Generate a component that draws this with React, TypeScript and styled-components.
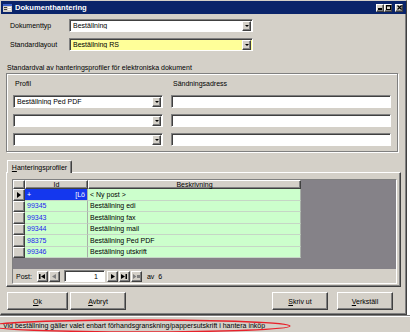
import React from 'react';
import styled, { createGlobalStyle, css } from 'styled-components';

const FONT = `'Liberation Sans', Arial, sans-serif`;

const GlobalStyle = createGlobalStyle`
  html, body {
    margin: 0;
    padding: 0;
    background: #ffffff;
  }
  body {
    font-family: ${FONT};
    font-size: 7px;
    color: #000;
  }
`;

const raised = css`
  border: 1px solid;
  border-color: #ffffff #404040 #404040 #ffffff;
  box-shadow: inset -1px -1px #808080;
  background: #d4d0c8;
  box-sizing: border-box;
`;

const sunken = css`
  border: 1px solid;
  border-color: #808080 #ffffff #ffffff #808080;
  box-shadow: inset 1px 1px #404040;
  box-sizing: border-box;
`;

const Page = styled.div`
  width: 410px;
  height: 332px;
  display: flex;
  flex-direction: column;
  overflow: hidden;
  background: #ffffff;
`;

const Window = styled.div`
  width: 407px;
  height: 315px;
  box-sizing: border-box;
  background: #d4d0c8;
  border: 1px solid;
  border-color: #d4d0c8 #404040 #404040 #d4d0c8;
  box-shadow: inset -1px -1px #808080;
  display: flex;
  flex-direction: column;
`;

const TitleBar = styled.div`
  height: 13px;
  background: #0a246a;
  display: flex;
  align-items: center;
  padding: 0 3px 0 2px;
`;

const Title = styled.span`
  color: #ffffff;
  font-weight: bold;
  font-size: 7.6px;
  margin-left: 3px;
`;

const Controls = styled.div`
  margin-left: auto;
  display: flex;
`;

const CtrlButton = styled.div<{ $gap?: boolean }>`
  ${raised};
  width: 8px;
  height: 8px;
  margin-left: ${p => (p.$gap ? '3px' : '0')};
  display: flex;
  align-items: center;
  justify-content: center;
`;

const Body = styled.div`
  padding: 5px 0 0 5px;
  display: flex;
  flex-direction: column;
`;

const FormRow = styled.div`
  display: flex;
  align-items: center;
  height: 13px;
  padding-left: 4px;
  margin-bottom: 6px;
`;

const Label = styled.div`
  width: 59px;
`;

const ComboBox = styled.div<{ $width: number; $yellow?: boolean }>`
  ${sunken};
  width: ${p => p.$width}px;
  height: 13px;
  background: ${p => (p.$yellow ? '#ffff99' : '#ffffff')};
  display: flex;
  align-items: center;
  padding: 0 1px 0 3px;
`;

const ComboText = styled.span`
  flex: 1;
  white-space: nowrap;
  overflow: hidden;
`;

const DropButton = styled.div`
  ${raised};
  width: 9px;
  height: 10px;
  display: flex;
  align-items: center;
  justify-content: center;
  &::after {
    content: '';
    border-left: 2px solid transparent;
    border-right: 2px solid transparent;
    border-top: 2px solid #000;
  }
`;

const Caption = styled.div`
  margin-top: 5px;
  padding-left: 1px;
  height: 11px;
  line-height: 11px;
`;

const GroupBox = styled.div`
  width: 392px;
  height: 79px;
  box-sizing: border-box;
  border: 1px solid #808080;
  box-shadow: inset 1px 1px #ffffff, 1px 1px #ffffff;
  padding: 5px 6px 0 6px;
  display: grid;
  grid-template-columns: 150px 220px;
  column-gap: 8px;
  row-gap: 6px;
  align-content: start;
`;

const GroupLabel = styled.div`
  height: 10px;
  line-height: 10px;
  padding-left: 2px;
`;

const TextField = styled.div`
  ${sunken};
  height: 13px;
  background: #ffffff;
`;

const TabStrip = styled.div`
  margin-top: 8px;
  display: flex;
  height: 13px;
  position: relative;
  z-index: 1;
  margin-bottom: -1px;
`;

const Tab = styled.div`
  margin-left: 1px;
  width: 65px;
  height: 13px;
  box-sizing: border-box;
  background: #d4d0c8;
  border-top: 1px solid #ffffff;
  border-left: 1px solid #ffffff;
  border-right: 1px solid #404040;
  border-top-right-radius: 2px;
  box-shadow: inset -1px 0 #808080;
  display: flex;
  align-items: center;
  justify-content: center;
`;

const Underline = styled.span`
  text-decoration: underline;
`;

const Panel = styled.div`
  width: 395px;
  height: 115px;
  box-sizing: border-box;
  border: 1px solid;
  border-color: #ffffff #404040 #404040 #ffffff;
  box-shadow: inset -1px -1px #808080;
  padding: 6px 0 0 5px;
`;

const Grid = styled.div`
  width: 385px;
  height: 105px;
  box-sizing: border-box;
  border: 1px solid;
  border-color: #808080 #ffffff #ffffff #808080;
  background: #858288;
  display: flex;
  flex-direction: column;
`;

const GridRows = styled.div`
  flex: 1;
  display: flex;
  flex-direction: column;
`;

const Row = styled.div<{ $header?: boolean }>`
  display: flex;
  height: ${p => (p.$header ? '9px' : '11.5px')};
`;

const Selector = styled.div`
  ${raised};
  width: 12px;
  flex-shrink: 0;
  display: flex;
  align-items: center;
  justify-content: center;
`;

const Pointer = styled.span`
  border-top: 3px solid transparent;
  border-bottom: 3px solid transparent;
  border-left: 4px solid #000;
`;

const HeaderCell = styled.div<{ $width: number }>`
  ${raised};
  width: ${p => p.$width}px;
  flex-shrink: 0;
  display: flex;
  align-items: center;
  justify-content: center;
  line-height: 1;
`;

const Cell = styled.div<{ $width: number; $blue?: boolean; $selected?: boolean }>`
  width: ${p => p.$width}px;
  flex-shrink: 0;
  box-sizing: border-box;
  background: ${p => (p.$selected ? '#1437ee' : '#ccffcc')};
  color: ${p => (p.$selected ? '#ffffff' : p.$blue ? '#1c1cf0' : '#000')};
  border-right: 1px solid #a8b0a8;
  border-bottom: 1px solid #c6d6c6;
  padding: 0 2px;
  display: flex;
  align-items: center;
  white-space: nowrap;
`;

const Placeholder = styled.span`
  margin-left: auto;
`;

const NavBar = styled.div`
  height: 14px;
  background: #d4d0c8;
  display: flex;
  align-items: center;
  padding-left: 3px;
`;

const NavButton = styled.div<{ $disabled?: boolean; $ml?: number }>`
  ${raised};
  width: 11px;
  height: 11px;
  margin-left: ${p => p.$ml ?? 1}px;
  display: flex;
  align-items: center;
  justify-content: center;
  color: ${p => (p.$disabled ? '#808080' : '#000')};
`;

const NavInput = styled.div`
  ${sunken};
  width: 41px;
  height: 12px;
  margin-left: 4px;
  background: #ffffff;
  display: flex;
  align-items: center;
  justify-content: flex-end;
  padding-right: 6px;
`;

const NavText = styled.span<{ $ml?: number }>`
  margin-left: ${p => p.$ml ?? 0}px;
`;

const ButtonRow = styled.div`
  margin-top: 5px;
  width: 395px;
  display: flex;
  padding-left: 1px;
  box-sizing: border-box;
`;

const PushButton = styled.div<{ $width: number; $ml?: number }>`
  ${raised};
  width: ${p => p.$width}px;
  height: 18px;
  margin-left: ${p => p.$ml ?? 0}px;
  display: flex;
  align-items: center;
  justify-content: center;
`;

const StatusBar = styled.div`
  position: relative;
  flex: 1;
  background: #d4d0c8;
  border-top: 1px solid #808080;
  box-shadow: inset 0 1px #ffffff;
  display: flex;
  align-items: center;
  padding: 2px 0 0 3px;
  white-space: nowrap;
`;

const Marker = styled.svg`
  position: absolute;
  left: 0;
  top: 0;
  pointer-events: none;
`;

const Arrow = ({ d }: { d: string }) => (
  <svg width="7" height="5" viewBox="0 0 7 5">
    <path d={d} fill="currentColor" />
  </svg>
);

const rows = [
  { id: '99345', text: 'Beställning edi' },
  { id: '99343', text: 'Beställning fax' },
  { id: '99344', text: 'Beställning mail' },
  { id: '98375', text: 'Beställning Ped PDF' },
  { id: '99346', text: 'Beställning utskrift' },
];

const App: React.FC = () => {
  return (
    <Page>
      <GlobalStyle />
      <Window>
        <TitleBar>
          <svg width="9" height="8" viewBox="0 0 9 8">
            <rect x="0" y="0" width="9" height="8" fill="#d4d0c8" />
            <rect x="0" y="0" width="9" height="2" fill="#3a5fc8" />
            <rect x="1" y="3" width="3" height="1" fill="#404040" />
            <rect x="5" y="3" width="3" height="1" fill="#ffffff" />
            <rect x="1" y="5" width="3" height="1" fill="#404040" />
            <rect x="5" y="5" width="3" height="1" fill="#ffffff" />
          </svg>
          <Title>Dokumenthantering</Title>
          <Controls>
            <CtrlButton>
              <svg width="4" height="5" viewBox="0 0 4 5">
                <rect x="0" y="3" width="4" height="2" fill="#000" />
              </svg>
            </CtrlButton>
            <CtrlButton>
              <svg width="5" height="5" viewBox="0 0 5 5">
                <rect x="0.5" y="0.5" width="4" height="4" fill="none" stroke="#000" />
                <rect x="0" y="0" width="5" height="1.5" fill="#000" />
              </svg>
            </CtrlButton>
            <CtrlButton $gap>
              <svg width="5" height="5" viewBox="0 0 5 5">
                <path d="M0.5 0.5 L4.5 4.5 M4.5 0.5 L0.5 4.5" stroke="#000" strokeWidth="1.2" />
              </svg>
            </CtrlButton>
          </Controls>
        </TitleBar>

        <Body>
          <FormRow>
            <Label>Dokumenttyp</Label>
            <ComboBox $width={184}>
              <ComboText>Beställning</ComboText>
              <DropButton />
            </ComboBox>
          </FormRow>
          <FormRow>
            <Label>Standardlayout</Label>
            <ComboBox $width={184} $yellow>
              <ComboText>Beställning RS</ComboText>
              <DropButton />
            </ComboBox>
          </FormRow>

          <Caption>Standardval av hanteringsprofiler för elektroniska dokument</Caption>
          <GroupBox>
            <GroupLabel>Profil</GroupLabel>
            <GroupLabel>Sändningsadress</GroupLabel>
            <ComboBox $width={150}>
              <ComboText>Beställning Ped PDF</ComboText>
              <DropButton />
            </ComboBox>
            <TextField />
            <ComboBox $width={150}>
              <ComboText />
              <DropButton />
            </ComboBox>
            <TextField />
            <ComboBox $width={150}>
              <ComboText />
              <DropButton />
            </ComboBox>
            <TextField />
          </GroupBox>

          <TabStrip>
            <Tab>
              <span>
                <Underline>H</Underline>anteringsprofiler
              </span>
            </Tab>
          </TabStrip>
          <Panel>
            <Grid>
              <GridRows>
                <Row $header>
                  <Selector />
                  <HeaderCell $width={63}>Id</HeaderCell>
                  <HeaderCell $width={213}>Beskrivning</HeaderCell>
                </Row>
                <Row>
                  <Selector>
                    <Pointer />
                  </Selector>
                  <Cell $width={63} $selected>
                    <span>+</span>
                    <Placeholder>[Lö</Placeholder>
                  </Cell>
                  <Cell $width={213}>&lt; Ny post &gt;</Cell>
                </Row>
                {rows.map(r => (
                  <Row key={r.id}>
                    <Selector />
                    <Cell $width={63} $blue>
                      {r.id}
                    </Cell>
                    <Cell $width={213}>{r.text}</Cell>
                  </Row>
                ))}
              </GridRows>
              <NavBar>
                <NavText>Post:</NavText>
                <NavButton $ml={5}>
                  <Arrow d="M0 0 H1.5 V5 H0 Z M6 0 V5 L2 2.5 Z" />
                </NavButton>
                <NavButton $disabled>
                  <Arrow d="M5 0 V5 L1 2.5 Z" />
                </NavButton>
                <NavInput>1</NavInput>
                <NavButton $ml={2}>
                  <Arrow d="M2 0 V5 L6 2.5 Z" />
                </NavButton>
                <NavButton>
                  <Arrow d="M0 0 V5 L4 2.5 Z M4.5 0 H6 V5 H4.5 Z" />
                </NavButton>
                <NavButton $disabled>
                  <Arrow d="M0 0 V5 L3.5 2.5 Z M4 1 H7 V4 H4 Z" />
                </NavButton>
                <NavText $ml={5}>av</NavText>
                <NavText $ml={4}>6</NavText>
              </NavBar>
            </Grid>
          </Panel>

          <ButtonRow>
            <PushButton $width={61}>
              <span>
                <Underline>O</Underline>k
              </span>
            </PushButton>
            <PushButton $width={56} $ml={2}>
              <span>
                <Underline>A</Underline>vbryt
              </span>
            </PushButton>
            <PushButton $width={56} $ml={146}>
              <span>
                <Underline>S</Underline>kriv ut
              </span>
            </PushButton>
            <PushButton $width={56} $ml={9}>
              <span>
                <Underline>V</Underline>erkställ
              </span>
            </PushButton>
          </ButtonRow>
        </Body>
      </Window>
      <StatusBar>
        Vid beställning gäller valet enbart förhandsgranskning/pappersutskrift i hantera inköp
        <Marker width="410" height="17" viewBox="0 0 410 17">
          <ellipse cx="140" cy="10" rx="150" ry="6" fill="none" stroke="#e8202a" strokeWidth="1.3" />
        </Marker>
      </StatusBar>
    </Page>
  );
};

export default App;
